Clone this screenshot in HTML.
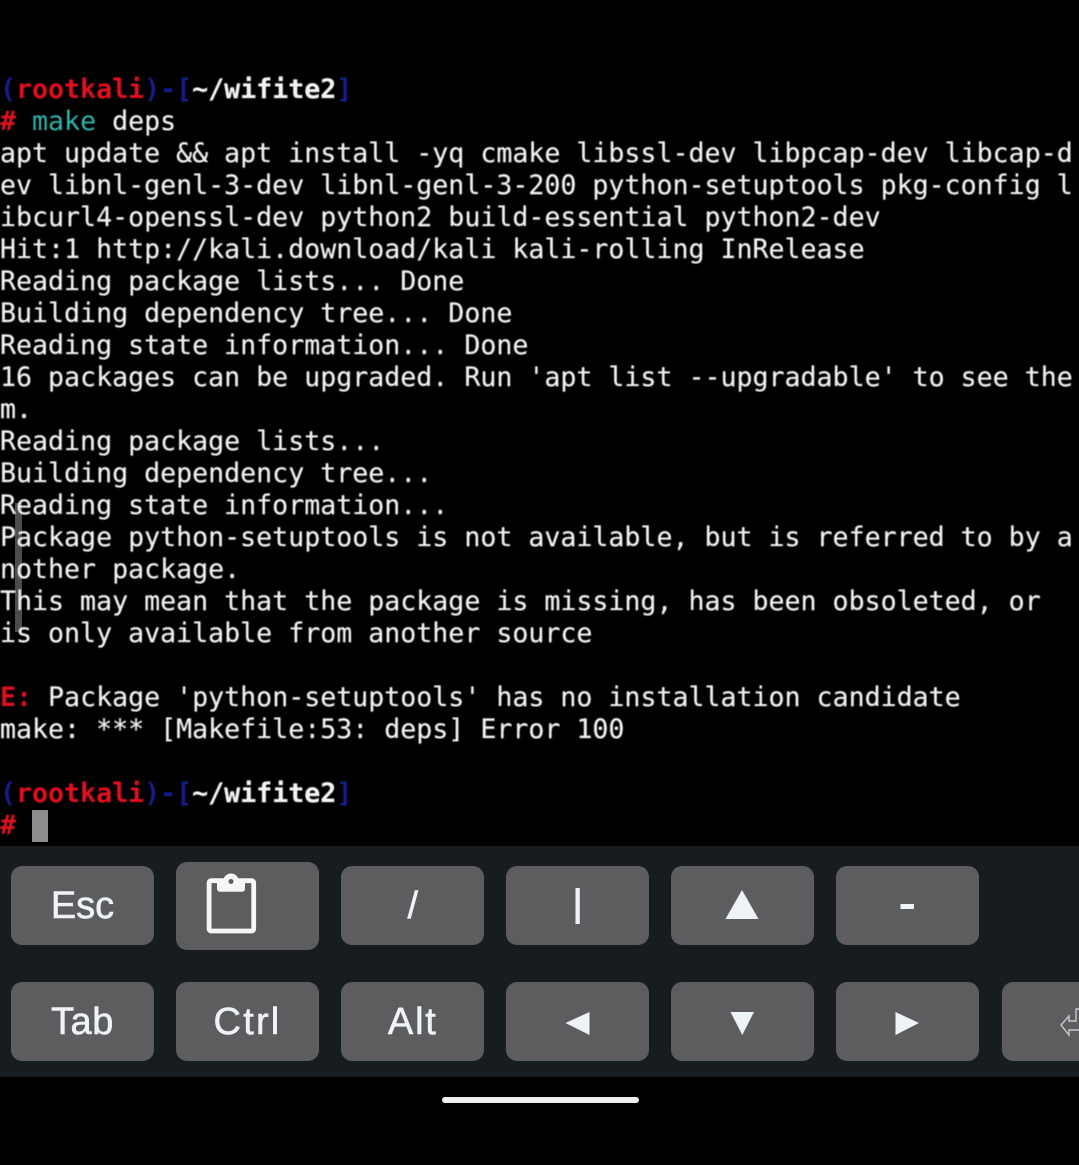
<!DOCTYPE html>
<html><head><meta charset="utf-8">
<style>
html,body{margin:0;padding:0;background:#000;}
body{width:1079px;height:1165px;position:relative;overflow:hidden;}
#t{position:absolute;left:0;top:74px;width:1079px;font-family:"DejaVu Sans Mono","Liberation Mono",monospace;font-size:26.6px;line-height:32px;color:#f0f0f0;filter:blur(.45px);-webkit-text-stroke:.2px #f0f0f0;}
#t div{height:32px;white-space:pre;}
b{font-weight:bold;}
.r{color:#e0101f;-webkit-text-stroke:0;}.bl{color:#141f8c;-webkit-text-stroke:0;}.c{color:#2fb5ad;-webkit-text-stroke:0;}
.w{color:#f4f4f4}
#cur{position:absolute;left:32px;top:810px;width:16px;height:32px;background:#8c8c8c;}
#sb{position:absolute;left:15px;top:503px;width:7px;height:129px;background:#4c4c4c;}
#bar{position:absolute;left:0;top:846px;width:1079px;height:231px;background:#171c20;}
.k{position:absolute;width:143px;height:79px;background:#5d5c5e;border-radius:11px;color:#eef3f6;font-family:"Liberation Sans",sans-serif;font-size:38px;line-height:81px;text-align:center;overflow:hidden;-webkit-text-stroke:.6px #eef3f6;}
svg{position:absolute;overflow:visible;}
#pill{position:absolute;left:442px;top:1097px;width:197px;height:6px;border-radius:3px;background:#f0f0f0;}
</style></head>
<body>
<div id="sb"></div>
<div id="t">
<div><b><span class="bl">(</span><span class="r">rootkali</span><span class="bl">)-[</span><span class="w">~/wifite2</span><span class="bl">]</span></b></div>
<div><b class="r">#</b> <span class="c">make</span> deps</div>
<div>apt update &amp;&amp; apt install -yq cmake libssl-dev libpcap-dev libcap-d</div>
<div>ev libnl-genl-3-dev libnl-genl-3-200 python-setuptools pkg-config l</div>
<div>ibcurl4-openssl-dev python2 build-essential python2-dev</div>
<div>Hit:1 http://kali.download/kali kali-rolling InRelease</div>
<div>Reading package lists... Done</div>
<div>Building dependency tree... Done</div>
<div>Reading state information... Done</div>
<div>16 packages can be upgraded. Run 'apt list --upgradable' to see the</div>
<div>m.</div>
<div>Reading package lists...</div>
<div>Building dependency tree...</div>
<div>Reading state information...</div>
<div>Package python-setuptools is not available, but is referred to by a</div>
<div>nother package.</div>
<div>This may mean that the package is missing, has been obsoleted, or</div>
<div>is only available from another source</div>
<div> </div>
<div><b class="r">E:</b> Package 'python-setuptools' has no installation candidate</div>
<div>make: *** [Makefile:53: deps] Error 100</div>
<div> </div>
<div><b><span class="bl">(</span><span class="r">rootkali</span><span class="bl">)-[</span><span class="w">~/wifite2</span><span class="bl">]</span></b></div>
<div><b class="r">#</b></div>
</div>
<div id="cur"></div>
<div id="bar"></div>

<div class="k" style="left:11px;top:866px">Esc</div>
<div class="k" style="left:176px;top:862px;height:88px"></div>
<svg style="left:0;top:0" width="1079" height="1165" viewBox="0 0 1079 1165">
<rect x="209.100" y="880.700" width="44.600" height="50.300" rx="2" fill="none" stroke="#f4f6f7" stroke-width="4.800"/>
<path d="M217 880H245V888.500Q245 891.700 242 891.700H220Q217 891.700 217 888.500Z" fill="#f4f6f7"/>
<circle cx="231" cy="881.500" r="8" fill="#f4f6f7"/>
<circle cx="231" cy="881.500" r="2.500" fill="#5d5c5e"/>
</svg>
<div class="k" style="left:341.300px;top:866px">/</div>
<div class="k" style="left:506.200px;top:866px"><svg style="left:0;top:0" width="143" height="79"><rect x="69.500" y="22" width="4.300" height="36" fill="#eef3f6"/></svg></div>
<div class="k" style="left:671.200px;top:866px"><svg style="left:0;top:0" width="143" height="79"><path d="M71 24L87.500 53H54.500Z" fill="#eef3f6"/></svg></div>
<div class="k" style="left:836.200px;top:866px"><svg style="left:0;top:0" width="143" height="79"><rect x="64.500" y="38" width="13.500" height="5" fill="#eef3f6"/></svg></div>

<div class="k" style="left:11px;top:982px;letter-spacing:.6px">Tab</div>
<div class="k" style="left:176px;top:982px;letter-spacing:2.200px">Ctrl</div>
<div class="k" style="left:341.300px;top:982px;letter-spacing:1.800px">Alt</div>
<div class="k" style="left:506.200px;top:982px"><svg style="left:0;top:0" width="143" height="79"><path d="M59.500 41L83.500 30V53Z" fill="#eef3f6"/></svg></div>
<div class="k" style="left:671.200px;top:982px"><svg style="left:0;top:0" width="143" height="79"><path d="M59.500 30H83L71.300 53Z" fill="#eef3f6"/></svg></div>
<div class="k" style="left:836.200px;top:982px"><svg style="left:0;top:0" width="143" height="79"><path d="M59.500 30L83 41L59.500 53Z" fill="#eef3f6"/></svg></div>
<div class="k" style="left:1002px;top:982px"><svg style="left:0;top:0" width="77" height="79"><path d="M77 27H74V39H67V34L59 43L67 53V48H77" fill="none" stroke="#c8cbcd" stroke-width="1.400"/></svg></div>
<div id="pill"></div>
</body></html>
